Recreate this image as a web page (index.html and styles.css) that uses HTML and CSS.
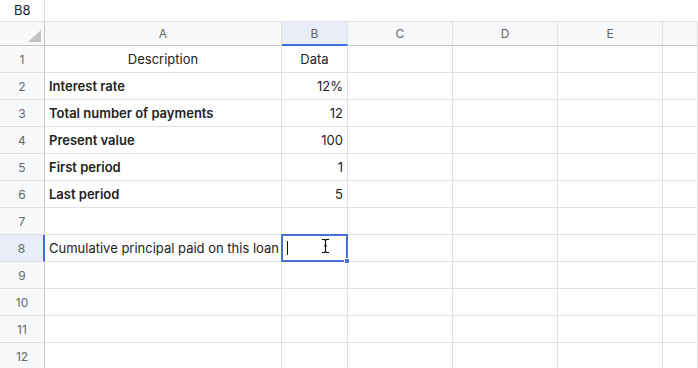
FILE: index.html
```html
<!DOCTYPE html>
<html lang="en">
<head>
    <meta charset="UTF-8">
    <title>Sheet</title>
    <link rel="stylesheet" href="styles.css">
</head>
<body>
    <div class="formula-bar">
        <div class="name-box">B8</div>
        <div class="formula-input"></div>
    </div>

    <div class="sheet">
        <!-- column headers -->
        <div class="corner"><span class="corner-mark"></span></div>
        <div class="col-head">A</div>
        <div class="col-head active">B</div>
        <div class="col-head">C</div>
        <div class="col-head">D</div>
        <div class="col-head">E</div>
        <div class="col-head"></div>

        <div class="row-head">1</div>
        <div class="cell center">Description</div>
        <div class="cell center">Data</div>
        <div class="cell"></div><div class="cell"></div><div class="cell"></div><div class="cell"></div>

        <div class="row-head">2</div>
        <div class="cell bold">Interest rate</div>
        <div class="cell num">12%</div>
        <div class="cell"></div><div class="cell"></div><div class="cell"></div><div class="cell"></div>

        <div class="row-head">3</div>
        <div class="cell bold">Total number of payments</div>
        <div class="cell num">12</div>
        <div class="cell"></div><div class="cell"></div><div class="cell"></div><div class="cell"></div>

        <div class="row-head">4</div>
        <div class="cell bold">Present value</div>
        <div class="cell num">100</div>
        <div class="cell"></div><div class="cell"></div><div class="cell"></div><div class="cell"></div>

        <div class="row-head">5</div>
        <div class="cell bold">First period</div>
        <div class="cell num">1</div>
        <div class="cell"></div><div class="cell"></div><div class="cell"></div><div class="cell"></div>

        <div class="row-head">6</div>
        <div class="cell bold">Last period</div>
        <div class="cell num">5</div>
        <div class="cell"></div><div class="cell"></div><div class="cell"></div><div class="cell"></div>

        <div class="row-head">7</div>
        <div class="cell"></div><div class="cell"></div>
        <div class="cell"></div><div class="cell"></div><div class="cell"></div><div class="cell"></div>

        <div class="row-head active">8</div>
        <div class="cell">Cumulative principal paid on this loan</div>
        <div class="cell selected">
            <span class="caret"></span>
            <svg class="ibeam" width="9" height="16" viewBox="0 0 9 16">
                <path d="M1 1.5h2.5l1 1 1-1H8M4.5 2.5v11M1 14.5h2.5l1-1 1 1H8M3 8h3" fill="none" stroke="#fff" stroke-width="2.6"/>
                <path d="M1 1.5h2.5l1 1 1-1H8M4.5 2.5v11M1 14.5h2.5l1-1 1 1H8M3 8h3" fill="none" stroke="#000" stroke-width="1.1"/>
            </svg>
            <span class="handle"></span>
        </div>
        <div class="cell"></div><div class="cell"></div><div class="cell"></div><div class="cell"></div>

        <div class="row-head">9</div>
        <div class="cell"></div><div class="cell"></div>
        <div class="cell"></div><div class="cell"></div><div class="cell"></div><div class="cell"></div>

        <div class="row-head">10</div>
        <div class="cell"></div><div class="cell"></div>
        <div class="cell"></div><div class="cell"></div><div class="cell"></div><div class="cell"></div>

        <div class="row-head">11</div>
        <div class="cell"></div><div class="cell"></div>
        <div class="cell"></div><div class="cell"></div><div class="cell"></div><div class="cell"></div>

        <div class="row-head">12</div>
        <div class="cell"></div><div class="cell"></div>
        <div class="cell"></div><div class="cell"></div><div class="cell"></div><div class="cell"></div>
    </div>
</body>
</html>
```

FILE: styles.css
```css
body {
    margin: 0;
    font-family: Inter, "Noto Sans", sans-serif;
    font-size: 13px;
    color: #222;
    background-color: white;
    overflow: hidden;
}
.formula-bar {
    display: flex;
    height: 22px;
    border-bottom: 1px solid #e1e1e1;
    box-sizing: border-box;
}
.name-box {
    width: 45px;
    box-sizing: border-box;
    border-right: 1px solid #e1e1e1;
    padding-left: 14px;
    line-height: 21px;
    font-size: 13px;
}
.sheet {
    display: grid;
    grid-template-columns: 45px 237px 66px 105px 105px 105px 1fr;
    grid-template-rows: 24px repeat(12, 27px);
}
.corner, .col-head, .row-head {
    background-color: #f8f9fa;
    color: #666;
    font-size: 12px;
    box-sizing: border-box;
}
.corner {
    position: relative;
    border-right: 1px solid #c6c6c6;
    border-bottom: 1px solid #c6c6c6;
}
.corner-mark {
    position: absolute;
    right: 3px;
    bottom: 3px;
    width: 0;
    height: 0;
    border-left: 13px solid transparent;
    border-bottom: 12px solid #c2c2c2;
}
.col-head {
    display: flex;
    align-items: center;
    justify-content: center;
    border-right: 1px solid #e1e1e1;
    border-bottom: 1px solid #c6c6c6;
}
.col-head.active {
    background-color: #e8edf8;
    border-bottom: 2px solid #3f6fdc;
}
.row-head {
    display: flex;
    align-items: center;
    justify-content: center;
    border-right: 1px solid #c6c6c6;
    border-bottom: 1px solid #e1e1e1;
}
.row-head.active {
    background-color: #e8edf8;
    border-right: 2px solid #3f6fdc;
}
.cell {
    display: flex;
    align-items: center;
    padding: 0 4px;
    box-sizing: border-box;
    border-right: 1px solid #e1e1e1;
    border-bottom: 1px solid #e1e1e1;
    white-space: nowrap;
}
.cell.center {
    justify-content: center;
}
.cell.num {
    justify-content: flex-end;
}
.cell.bold {
    font-weight: 600;
}
.cell.selected {
    position: relative;
}
.cell.selected::after {
    content: "";
    position: absolute;
    left: -1px;
    top: -1px;
    right: -1px;
    bottom: -1px;
    border: 2px solid #4a70d6;
}
.caret {
    position: absolute;
    left: 5px;
    top: 6px;
    width: 1px;
    height: 14px;
    background-color: #111;
}
.ibeam {
    position: absolute;
    left: 39px;
    top: 3px;
    z-index: 2;
}
.handle {
    position: absolute;
    right: -3px;
    bottom: -3px;
    width: 4px;
    height: 4px;
    background-color: #4a70d6;
    border: 1px solid white;
    z-index: 1;
}
```
